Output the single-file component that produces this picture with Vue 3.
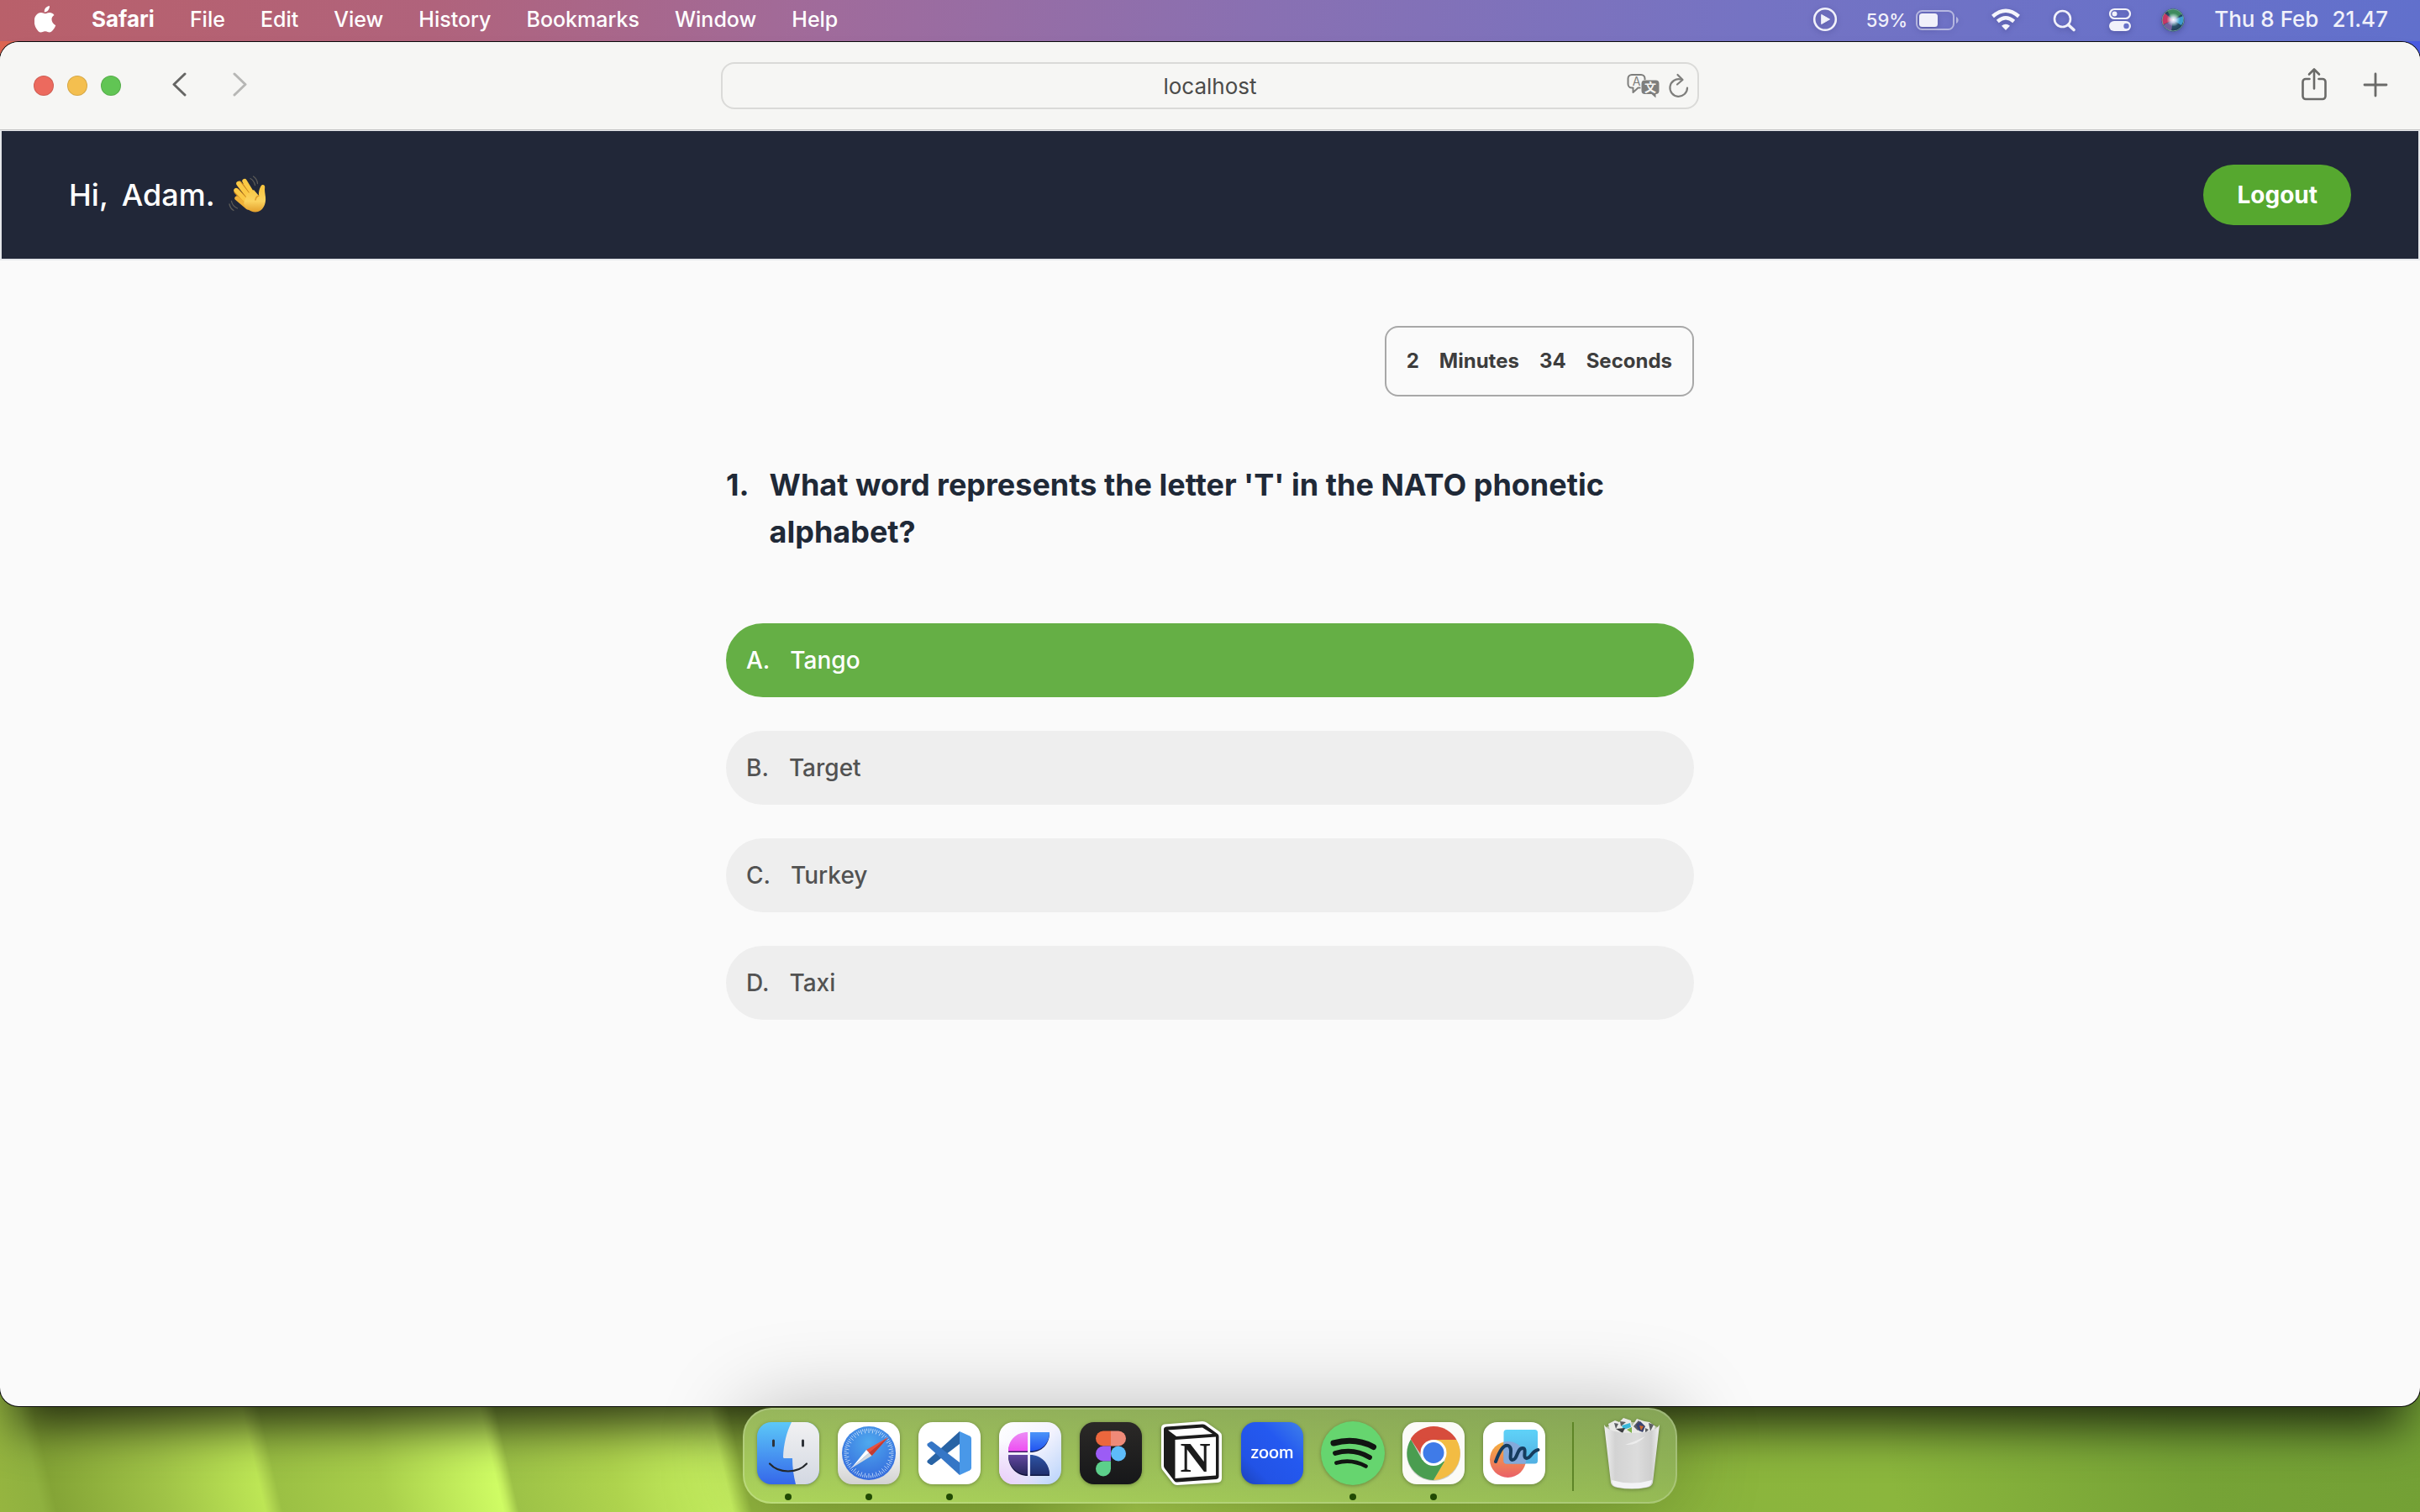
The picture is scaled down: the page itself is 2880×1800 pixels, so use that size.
<script setup>
import { ref } from 'vue'

const menus = ['File', 'Edit', 'View', 'History', 'Bookmarks', 'Window', 'Help']
const address = ref('localhost')
const selected = ref('A')
const options = [
  { key: 'A', text: 'Tango' },
  { key: 'B', text: 'Target' },
  { key: 'C', text: 'Turkey' },
  { key: 'D', text: 'Taxi' },
]

// Safari dial: 72 ticks, alternately long and short
const ticks = Array.from({ length: 72 }, (_, i) => {
  const a = (i * 5 * Math.PI) / 180
  const inner = i % 2 ? 26.5 : 24
  return {
    x1: 37 + inner * Math.sin(a),
    y1: 37 - inner * Math.cos(a),
    x2: 37 + 29.5 * Math.sin(a),
    y2: 37 - 29.5 * Math.cos(a),
  }
})
</script>

<template>
  <div class="desktop">
    <header class="menubar">
      <nav class="menus" aria-label="Menu bar">
        <svg class="apple" width="26" height="32" viewBox="0 0 26 32" aria-hidden="true">
          <path d="M17.900 0c.3 2-.5 3.900-1.600 5.200-1.100 1.400-2.800 2.300-4.500 2.200-.3-1.900.6-3.900 1.600-5.100C14.600 1 16.400.1 17.900 0z" />
          <path d="M25.300 23.200c-.7 1.700-1.100 2.400-2 3.900-1.300 2-3.100 4.500-5.300 4.500-2 0-2.500-1.300-5.200-1.300s-3.300 1.300-5.200 1.300c-2.200 0-3.900-2.300-5.200-4.300C-1.200 21.800-.9 14.300 2.100 11c1.500-1.800 3.600-2.900 5.700-2.900 2.100 0 3.400 1.200 5.200 1.200 1.700 0 2.700-1.200 5.200-1.200 1.900 0 3.800 1 5.300 2.800-4.600 2.500-3.900 9.100 1.800 12.300z" />
        </svg>
        <button class="menu app" type="button">Safari</button>
        <button v-for="m in menus" :key="m" class="menu" type="button">{{ m }}</button>
      </nav>

      <div class="status">
        <svg width="30" height="48" viewBox="0 0 30 48" aria-hidden="true">
          <circle cx="15" cy="23" r="12.800" fill="none" stroke="#f1f1fa" stroke-width="2.600" />
          <path d="M10.700 17.400v11.200l9.800-5.600z" fill="#f1f1fa" stroke="#f1f1fa" stroke-linejoin="round" />
        </svg>
        <div class="battery">
          <span>59%</span>
          <svg width="56" height="48" viewBox="0 0 56 48" aria-hidden="true">
            <rect x="2" y="13" width="44" height="22" rx="6.500" fill="none" stroke="#fff" stroke-opacity=".5" stroke-width="2" />
            <rect x="5" y="16" width="22" height="16" rx="3.500" fill="#f1f1fa" />
            <path d="M49 20c3.500 1.500 3.500 6.500 0 8z" fill="#fff" fill-opacity=".5" />
          </svg>
        </div>
        <svg width="40" height="48" viewBox="0 0 40 48" fill="none" stroke="#f5f5fc" stroke-width="4.400" aria-hidden="true">
          <path d="M2.500 19.500Q18 6 33.500 19.500" />
          <path d="M8.300 25.500Q18 17 27.700 25.500" />
          <path d="M18 36l-5-5.200q5-4.300 10 0z" fill="#f5f5fc" stroke="none" />
        </svg>
        <svg width="30" height="48" viewBox="0 0 30 48" fill="none" stroke="#f1f1fa" aria-hidden="true">
          <circle cx="11.500" cy="22.500" r="9.500" stroke-width="2.600" />
          <path d="M18.500 29.500l6.500 6" stroke-width="3.600" stroke-linecap="round" />
        </svg>
        <svg width="30" height="48" viewBox="0 0 30 48" aria-hidden="true">
          <rect x="4" y="11" width="24" height="11" rx="5.500" fill="none" stroke="#f1f1fa" stroke-width="2.200" />
          <circle cx="9.500" cy="16.500" r="3" fill="#f1f1fa" />
          <rect x="3" y="25" width="26" height="12" rx="6" fill="#f1f1fa" />
          <circle cx="23.500" cy="31" r="3.200" fill="#6872c8" />
        </svg>
        <svg width="30" height="48" viewBox="0 0 30 48" aria-hidden="true">
          <defs>
            <radialGradient id="siriBase"><stop offset="0" stop-color="#3b6c8f" /><stop offset=".7" stop-color="#274a63" /><stop offset="1" stop-color="#1f3b56" /></radialGradient>
            <radialGradient id="siriGlow"><stop offset="0" stop-color="#fff" /><stop offset=".4" stop-color="#e9eaff" stop-opacity=".8" /><stop offset="1" stop-color="#cfe" stop-opacity="0" /></radialGradient>
          </defs>
          <circle cx="15" cy="24" r="13.500" fill="url(#siriBase)" />
          <path d="M15 24L5 15.500a13 13 0 0 0-2 14z" fill="#c63765" />
          <path d="M15 24L8 12.500a13 13 0 0 1 18 4z" fill="#3f8a5e" />
          <path d="M15 24l12-5a13 13 0 0 1-2 11z" fill="#3d9bcf" />
          <path d="M15 24L4 29.500a13 13 0 0 0 9 7.500z" fill="#71609f" />
          <circle cx="15.500" cy="23.500" r="8" fill="url(#siriGlow)" />
          <circle cx="15" cy="24" r="13" fill="none" stroke="#6c9a98" stroke-width="1" />
        </svg>
        <time class="clock"><span>Thu 8 Feb</span><span>21.47</span></time>
      </div>
    </header>

    <section class="window">
      <div class="toolbar">
        <div class="tools">
          <div class="lights">
            <button class="light red" type="button" aria-label="Close"></button>
            <button class="light amber" type="button" aria-label="Minimise"></button>
            <button class="light green" type="button" aria-label="Zoom"></button>
          </div>
          <div class="arrows">
            <button class="icon" type="button" aria-label="Back">
              <svg width="20" height="32" viewBox="0 0 20 32"><path d="M16 2L3 14.500 16 27" fill="none" stroke="#666664" stroke-width="3" stroke-linecap="round" stroke-linejoin="round" /></svg>
            </button>
            <button class="icon" type="button" aria-label="Forward">
              <svg width="20" height="32" viewBox="0 0 20 32"><path d="M3 2l13 12.500L3 27" fill="none" stroke="#b7b7b5" stroke-width="3" stroke-linecap="round" stroke-linejoin="round" /></svg>
            </button>
          </div>
        </div>

        <div class="addressbar">
          <input v-model="address" class="address" type="text" aria-label="Address" />
          <div class="addresstools">
            <button class="icon" type="button" aria-label="Translate">
              <svg width="40" height="32" viewBox="0 0 40 32">
                <path d="M16.500 18.500h-3L7.500 24v-5.500H6A4.500 4.500 0 0 1 1.500 14V7.500A4.500 4.500 0 0 1 6 3h11a4.500 4.500 0 0 1 4.500 4.500V9" fill="none" stroke="#7e7e7c" stroke-width="2" stroke-linejoin="round" />
                <path d="M21.500 9.500h13a4 4 0 0 1 4 4V22a4 4 0 0 1-4 4v4.500l-5-4.500h-8a4 4 0 0 1-4-4v-8.500a4 4 0 0 1 4-4z" fill="#7e7e7c" />
                <text x="11.500" y="16" font-size="14" text-anchor="middle" fill="#7e7e7c">A</text>
                <text x="28" y="23" font-size="14" font-weight="700" text-anchor="middle" fill="#f6f6f4">文</text>
              </svg>
            </button>
            <button class="icon" type="button" aria-label="Reload">
              <svg width="26" height="32" viewBox="0 0 26 32" fill="none" stroke="#7e7e7c" stroke-width="2.200" stroke-linecap="round" stroke-linejoin="round">
                <path d="M23 18.500A10.300 10.300 0 1 1 15 8.500" /><path d="M11.500 3l6 6-6.500 5.500" />
              </svg>
            </button>
          </div>
        </div>

        <div class="tools end">
          <button class="icon" type="button" aria-label="Share">
            <svg width="32" height="44" viewBox="0 0 32 44" fill="none" stroke="#6a6a68" stroke-width="2.600" stroke-linecap="round" stroke-linejoin="round">
              <path d="M10.500 14H6a3.500 3.500 0 0 0-3.500 3.500v17A3.500 3.500 0 0 0 6 38h20a3.500 3.500 0 0 0 3.500-3.500v-17A3.500 3.500 0 0 0 26 14h-4.500M16 25.500V3M10 8.500L16 2.500l6 6" />
            </svg>
          </button>
          <button class="icon" type="button" aria-label="New tab">
            <svg width="30" height="32" viewBox="0 0 30 32"><path d="M15 2v26M2 15h26" stroke="#6a6a68" stroke-width="2.800" stroke-linecap="round" /></svg>
          </button>
        </div>
      </div>

      <div class="banner">
        <p class="greeting">
          <span>Hi,</span><span>Adam.</span>
          <svg width="48" height="46" viewBox="0 0 48 46" role="img" aria-label="Waving hand">
            <defs>
              <linearGradient id="skin" x1="0" y1="0" x2="0" y2="1"><stop offset="0" stop-color="#f7c33c" /><stop offset=".6" stop-color="#fbd35f" /><stop offset="1" stop-color="#e3a02c" /></linearGradient>
            </defs>
            <path d="M20 12L31 30" stroke="#e5a22f" stroke-width="7" stroke-linecap="round" />
            <path d="M19 6.500l11 18" stroke="#fbc945" stroke-width="5.400" stroke-linecap="round" />
            <path d="M13 10l14 19" stroke="#c98620" stroke-width="7" stroke-linecap="round" />
            <path d="M12 9.500l14 18" stroke="#fbc945" stroke-width="5.400" stroke-linecap="round" />
            <path d="M10 19l14 15" stroke="#c98620" stroke-width="7" stroke-linecap="round" />
            <path d="M9 17.500l14 15" stroke="#fbc945" stroke-width="5.400" stroke-linecap="round" />
            <path d="M10 27l13 11" stroke="#efb137" stroke-width="5.400" stroke-linecap="round" />
            <path d="M18 33l4-11 8-5 6 7c-.3-4 .4-8 2.500-11.500 1.800-2.800 5-1.500 4.700 1.200-.6 3.800.4 8 .8 12C44.800 34 41 43 32 43.500 25 43.500 20 38 18 33z" fill="url(#skin)" />
            <path d="M36 24c-2 .5-3.500 2-4 5" fill="none" stroke="#dc9a2b" stroke-width="1.500" stroke-linecap="round" />
            <path d="M26 3.500q4.500 2.500 5.500 8M29.500 1q4.500 3 5 8.500M3.500 30.500q1 6 7 8.500M1 34q1 5 5 7.500" fill="none" stroke="#5c5b58" stroke-width="1.300" stroke-linecap="round" />
          </svg>
        </p>
        <button class="logout" type="button">Logout</button>
      </div>

      <main class="quiz">
        <div class="timer" role="timer">
          <span>2</span><span>Minutes</span><span>34</span><span>Seconds</span>
        </div>
        <h1 class="question">
          <span>1.</span>
          <span>What word represents the letter 'T' in the NATO phonetic alphabet?</span>
        </h1>
        <div class="options">
          <button
            v-for="o in options"
            :key="o.key"
            type="button"
            class="option"
            :class="{ chosen: selected === o.key }"
            :aria-pressed="selected === o.key"
            @click="selected = o.key"
          >
            <span>{{ o.key }}.</span><span>{{ o.text }}</span>
          </button>
        </div>
      </main>
    </section>

    <footer class="dockarea">
      <nav class="dock" aria-label="Dock">
        <div class="app-slot running">
          <svg width="74" height="74" viewBox="0 0 74 74" role="img" aria-label="Finder">
            <defs>
              <linearGradient id="fBlue" x1="0" y1="0" x2="0" y2="1"><stop offset="0" stop-color="#5cc8f8" /><stop offset="1" stop-color="#3567ea" /></linearGradient>
              <linearGradient id="fGrey" x1="0" y1="0" x2="0" y2="1"><stop offset="0" stop-color="#f1f1f2" /><stop offset="1" stop-color="#d3d8e2" /></linearGradient>
              <clipPath id="tile"><rect width="74" height="74" rx="17" /></clipPath>
            </defs>
            <g clip-path="url(#tile)">
              <rect width="74" height="74" fill="url(#fBlue)" />
              <path d="M41 0C35 12 31.500 27 31 41.500q0 1.500 1.500 1.500H42c0 11 1.500 21 4 31h28V0z" fill="url(#fGrey)" />
            </g>
            <path d="M19.500 22v6M54.500 22v6" stroke="#2e3238" stroke-width="3" stroke-linecap="round" />
            <path d="M15 49.500c11 12 33 12 44 0" fill="none" stroke="#23272b" stroke-width="2.200" stroke-linecap="round" />
          </svg>
        </div>
        <div class="app-slot running">
          <svg width="74" height="74" viewBox="0 0 74 74" role="img" aria-label="Safari">
            <defs>
              <linearGradient id="sTile" x1="0" y1="0" x2="0" y2="1"><stop offset=".3" stop-color="#fff" /><stop offset="1" stop-color="#d2d2d2" /></linearGradient>
              <radialGradient id="sDial" cx=".5" cy=".3" r=".7"><stop offset="0" stop-color="#4fa9ee" /><stop offset="1" stop-color="#356bdc" /></radialGradient>
            </defs>
            <rect width="74" height="74" rx="17" fill="url(#sTile)" />
            <circle cx="37" cy="37" r="32" fill="url(#sDial)" />
            <line v-for="(t, i) in ticks" :key="i" v-bind="t" stroke="#d9ebfb" stroke-width=".8" />
            <path d="M60 18L34 33l6.500 7z" fill="#e8503f" />
            <path d="M60 18L37 36.500l3.500 3.500z" fill="#c23b31" />
            <path d="M16 55L34 33l3.200 3.500z" fill="#fff" />
            <path d="M16 55l21.200-18.500 3.300 3.500z" fill="#d5d9de" />
          </svg>
        </div>
        <div class="app-slot running">
          <svg width="74" height="74" viewBox="0 0 74 74" role="img" aria-label="Visual Studio Code">
            <rect width="74" height="74" rx="17" fill="#fff" />
            <path d="M49 11L11 45.500q-1.500 1.500 0 3l3 2q1.500 1 3 0L49 26z" fill="#2863a5" />
            <path d="M49 63L11 28.500q-1.500-1.500 0-3l3-2q1.500-1 3 0L49 48z" fill="#3576c6" />
            <path d="M49 11l12 5.500q2 1 2 3v35q0 2-2 3L49 63z" fill="#4998e8" />
          </svg>
        </div>
        <div class="app-slot">
          <svg width="74" height="74" viewBox="0 0 74 74" role="img" aria-label="Craft">
            <defs>
              <linearGradient id="cTile" x1="0" y1="0" x2="1" y2="1"><stop offset="0" stop-color="#fff" /><stop offset=".5" stop-color="#f3f3fe" /><stop offset="1" stop-color="#b7d2fa" /></linearGradient>
              <radialGradient id="cPink" cx="0" cy="1" r=".7"><stop offset="0" stop-color="#e9cdf9" /><stop offset="1" stop-color="#e9cdf9" stop-opacity="0" /></radialGradient>
              <linearGradient id="c1" x1="0" y1="0" x2="0" y2="1"><stop offset="0" stop-color="#ec8df5" /><stop offset="1" stop-color="#ee4ef2" /></linearGradient>
              <linearGradient id="c2" x1="0" y1="0" x2="0" y2="1"><stop offset="0" stop-color="#4b94f8" /><stop offset="1" stop-color="#2253f0" /></linearGradient>
              <linearGradient id="c3" x1="0" y1="0" x2="0" y2="1"><stop offset="0" stop-color="#62479f" /><stop offset="1" stop-color="#29275f" /></linearGradient>
              <linearGradient id="c4" x1="0" y1="0" x2="0" y2="1"><stop offset="0" stop-color="#2e54a4" /><stop offset="1" stop-color="#20306f" /></linearGradient>
            </defs>
            <rect width="74" height="74" rx="17" fill="url(#cTile)" />
            <rect width="74" height="74" rx="17" fill="url(#cPink)" />
            <path d="M34 13v23H11c0-13 9-23 23-23z" fill="#3a1d63" /><path d="M34 12v22.500H11c0-13 9-22.500 23-22.500z" fill="url(#c1)" />
            <path d="M37 13h23c0 13-9 23-23 23z" fill="#16225c" /><path d="M37 12h23c0 13-9 22.500-23 22.500z" fill="url(#c2)" />
            <path d="M34 40v24c-13 0-23-10-23-24z" fill="#12123c" /><path d="M34 39v23.500c-13 0-23-10-23-23.500z" fill="url(#c3)" />
            <path d="M37 40c13 0 23 10 23 24H37z" fill="#101a45" /><path d="M37 39c13 0 23 10 23 23.500H37z" fill="url(#c4)" />
          </svg>
        </div>
        <div class="app-slot">
          <svg width="74" height="74" viewBox="0 0 74 74" role="img" aria-label="Figma">
            <defs><linearGradient id="gTile" x1="0" y1="0" x2="0" y2="1"><stop offset="0" stop-color="#2b2927" /><stop offset="1" stop-color="#161719" /></linearGradient></defs>
            <rect width="74" height="74" rx="17" fill="url(#gTile)" />
            <path d="M37 10.500h-9a9 9 0 0 0 0 18h9z" fill="#ec673d" />
            <path d="M37 10.500h9a9 9 0 0 1 0 18h-9z" fill="#ef8a78" />
            <path d="M37 28.500h-9a9 9 0 0 0 0 18h9z" fill="#9c5cf5" />
            <circle cx="46" cy="37.500" r="9" fill="#5dbcfa" />
            <path d="M37 46.500h-9a9 9 0 1 0 9 9z" fill="#5ccf8b" />
          </svg>
        </div>
        <div class="app-slot">
          <svg width="74" height="78" viewBox="0 0 74 78" role="img" aria-label="Notion">
            <path d="M5 4.500L50 1q3 0 5 1.500l15.500 11q2.500 2 2.500 5v50q0 5-5 5.500L20 77q-3 0-5-2L2.500 59Q1 57 1 54V9q0-4 4-4.500z" fill="#fff" />
            <path d="M7 7.500L50 4.500q2 0 3.500 1L68 16q1.500 1 1.500 3v47.500q0 3-3 3.500L19.500 73.500q-2 0-3-1.500L5 57q-1-1.500-1-3V10.500q0-2.500 3-3z" fill="#1b1b1b" />
            <path d="M9 11.500L50 8.500l12 7.500L19 19z" fill="#fff" />
            <path d="M17.500 23L66 19.500v46L17.500 69z" fill="#fff" />
            <text x="41.500" y="61" text-anchor="middle" font-family="'Liberation Serif', serif" font-weight="700" font-size="50" fill="#1b1b1b">N</text>
          </svg>
        </div>
        <div class="app-slot">
          <svg width="74" height="74" viewBox="0 0 74 74" role="img" aria-label="Zoom">
            <defs><linearGradient id="zTile" x1="1" y1="0" x2="0" y2="1"><stop offset="0" stop-color="#3f80ea" /><stop offset=".35" stop-color="#2459f0" /><stop offset=".75" stop-color="#2253e6" /><stop offset="1" stop-color="#1c42b8" /></linearGradient></defs>
            <rect width="74" height="74" rx="17" fill="url(#zTile)" />
            <text x="37" y="43" text-anchor="middle" font-size="21" font-weight="600" font-family="Lato, sans-serif" fill="#fff">zoom</text>
          </svg>
        </div>
        <div class="app-slot running">
          <svg width="76" height="76" viewBox="0 0 76 76" role="img" aria-label="Spotify">
            <circle cx="38" cy="38" r="38" fill="#66d56f" />
            <g fill="none" stroke="#111512" stroke-linecap="round">
              <path d="M15 26q26-7 47.500 4.500" stroke-width="7" />
              <path d="M17 38q22-6.500 41 5" stroke-width="5.800" />
              <path d="M18.500 49.500q18-5 35 4" stroke-width="4.800" />
            </g>
          </svg>
        </div>
        <div class="app-slot running">
          <svg width="74" height="74" viewBox="0 0 74 74" role="img" aria-label="Chrome">
            <rect width="74" height="74" rx="17" fill="#fbfbf7" />
            <circle cx="37" cy="38" r="32" fill="#c9ccc6" />
            <path d="M37 37L10 19.500A32 32 0 0 1 64.400 21z" fill="#d74c3c" />
            <path d="M37 21h27.400A32 32 0 0 1 37 69l14-24z" fill="#f3bc43" />
            <path d="M23.500 45L10 20.500A32 32 0 0 0 37 69l13-22z" fill="#4a9d50" />
            <path d="M23 40L10 20.500q1-2 2-3L37 21z" fill="#d74c3c" />
            <circle cx="37" cy="36.500" r="15.500" fill="#fff" />
            <circle cx="37" cy="36.500" r="12.500" fill="#3f7be8" />
          </svg>
        </div>
        <div class="app-slot">
          <svg width="74" height="74" viewBox="0 0 74 74" role="img" aria-label="Freeform">
            <defs>
              <linearGradient id="ffO" x1="0" y1="0" x2="0" y2="1"><stop offset="0" stop-color="#f5b13f" /><stop offset="1" stop-color="#ea6068" /></linearGradient>
              <linearGradient id="ffB" x1="0" y1="0" x2="0" y2="1"><stop offset="0" stop-color="#5fd2f8" /><stop offset="1" stop-color="#52b0e2" /></linearGradient>
            </defs>
            <rect width="74" height="74" rx="17" fill="#fff" />
            <circle cx="29.500" cy="44.500" r="21.500" fill="url(#ffO)" />
            <rect x="24.500" y="9" width="40.500" height="40.500" rx="3.500" fill="url(#ffB)" />
            <path d="M24.500 23.600A21.500 21.500 0 0 1 50.500 49.500h-23q-3 0-3-3z" fill="#84a9da" />
            <path d="M15 47C20 33 25 26 30 28c7 3-1 17 5 17s5-14 12-14c6 0-1 12 5 12 5 0 6-9 13.500-10" fill="none" stroke="#163c5e" stroke-width="4" stroke-linecap="round" stroke-linejoin="round" />
          </svg>
        </div>
        <div class="divider"></div>
        <div class="app-slot">
          <svg width="68" height="88" viewBox="0 0 68 88" role="img" aria-label="Trash">
            <defs>
              <linearGradient id="bin" x1="0" y1="0" x2="1" y2="0"><stop offset="0" stop-color="#f0f0f0" /><stop offset=".2" stop-color="#d3d3d3" /><stop offset=".6" stop-color="#dcdcdc" /><stop offset=".85" stop-color="#cfcfcf" /><stop offset="1" stop-color="#f1f1f1" /></linearGradient>
            </defs>
            <path d="M3 13q31-12 62 0l-3 8H6z" fill="#b9c3a8" />
            <path d="M6 9l8-4 5 2 5-5 9 3 1 7 6-9 9 3 6 1 7 5-3 9H9z" fill="#e9e9e7" />
            <path d="M13 8l5 1-3 6zM20 6l7 1-6 5zM36 12l6-7 4 5-5 7zM54 8l6 2-4 8zM50 14l4 2-4 4z" fill="#5d5f63" />
            <path d="M22 11l10-3 1 5-9 3z" fill="#38b7d9" />
            <path d="M39 10l5-4 6 6-3 7-5-2z" fill="#3a4470" /><path d="M43 11l5 1-3 5z" fill="#d0672d" />
            <path d="M28 16l6-3v7z" fill="#7eb34b" />
            <path d="M15 15l11-1-3 6z" fill="#3b3c40" />
            <path d="M1 10q5 10 33 10t33-10l-8 69q-1 5-8 6-17 3-34 0-7-1-8-6z" fill="url(#bin)" />
            <path d="M10 76q24 7 48 0l-.5 3q-1 4.500-7 5.500-16 3-33 0-6-1-7-5.500z" fill="#f3f3f6" />
            <path d="M26 34q14 1 24-10-12 6-24 10z" fill="#ececec" />
          </svg>
        </div>
      </nav>
    </footer>
  </div>
</template>

<style>
body {
  margin: 0;
}
</style>

<style scoped>
.desktop {
  display: flex;
  flex-direction: column;
  min-height: 100vh;
  overflow: hidden;
  font-family: Inter, "Liberation Sans", "Noto Sans CJK SC", sans-serif;
  background-color: #8fb53d;
  background-image:
    linear-gradient(90deg, #dd6652, #b4302f 24%, #4a5be0 60%, #4a5be0),
    linear-gradient(
      77deg,
      #96b540 0,
      #8fb13f 50px,
      #84a436 66px,
      #a0c347 196px,
      #bde655 308px,
      #b4da52 314px,
      #9bc044 328px,
      #a9cf4b 450px,
      #cffc64 584px,
      #c4ee5e 590px,
      #9dc247 602px,
      #aed34d 720px,
      #c8f261 850px,
      #93b73f 872px,
      #8bb03a 1180px,
      #a6cc4b 1320px,
      #8cb23c 1600px,
      #8bb63d 2200px,
      #76a336 2550px,
      #73a035 100%
    );
  background-repeat: no-repeat;
  background-position: top, bottom;
  background-size: 100% 120px, 100% 156px;
}

button {
  margin: 0;
  padding: 0;
  border: 0;
  background: none;
  color: inherit;
  font: inherit;
  cursor: pointer;
}

svg {
  display: block;
  flex: none;
}

.menubar {
  display: flex;
  justify-content: space-between;
  height: 49px;
  padding: 0 38px 0 41px;
  color: #fff;
  font-size: 25px;
  font-weight: 500;
  line-height: 46px;
  background: linear-gradient(95deg, #b9606a, #b0637c 18%, #a06b9b 34%, #8970b2 52%, #7573c3 72%, #6170cc);
}

.menus,
.status {
  display: flex;
}

.menus {
  gap: 42px;
}

.apple {
  margin-top: 7px;
  fill: #fff;
}

.menu {
  height: 46px;
}

.menu.app {
  font-size: 26px;
  font-weight: 700;
}

.status {
  gap: 34px;
  color: #f1f1fa;
}

.status svg {
  filter: drop-shadow(0 2px 3px rgba(30, 30, 90, 0.3));
}

.battery {
  display: flex;
  gap: 9px;
  font-size: 22px;
  line-height: 48px;
}

.clock {
  display: flex;
  gap: 16px;
  font-size: 26px;
}

.window {
  position: relative;
  z-index: 1;
  display: flex;
  flex: 1;
  flex-direction: column;
  border-radius: 22px;
  background: #fafafa;
  box-shadow: 0 0 0 1px #0a0a0a, 0 42px 56px -18px rgba(0, 0, 0, 0.75);
  margin-top: 1px;
}

.toolbar {
  display: grid;
  grid-template-columns: 1fr minmax(400px, 1164px) 1fr;
  align-items: center;
  height: 104px;
  padding: 0 38px;
  border-bottom: 1px solid #c4c4c4;
  border-radius: 22px 22px 0 0;
  background: #f6f6f4;
}

.tools {
  display: flex;
  align-items: center;
  gap: 60px;
}

.tools.end {
  justify-content: flex-end;
  gap: 42px;
}

.lights {
  display: flex;
  gap: 16px;
  padding-left: 2px;
}

.light {
  width: 24px;
  height: 24px;
  border: 1px solid rgba(0, 0, 0, 0.12);
  border-radius: 50%;
}

.red {
  background: #ec6a5e;
}

.amber {
  background: #f4bf4f;
}

.green {
  background: #61c554;
}

.arrows {
  display: flex;
  gap: 52px;
}

.addressbar {
  position: relative;
}

.address {
  display: block;
  box-sizing: border-box;
  width: 100%;
  height: 56px;
  padding: 0 96px;
  border: 2px solid #dadad8;
  border-radius: 16px;
  background: #f6f6f4;
  color: #4b4b4a;
  font: 400 26px Inter, "Liberation Sans", sans-serif;
  text-align: center;
}

.addresstools {
  position: absolute;
  top: 0;
  right: 11px;
  bottom: 0;
  display: flex;
  align-items: center;
  gap: 9px;
}

.banner {
  display: flex;
  align-items: center;
  justify-content: space-between;
  height: 152px;
  padding: 0 80px;
  border: 2px solid #e5e7eb;
  border-top-width: 1px;
  background: #212738;
  color: #fff;
}

.greeting {
  display: flex;
  align-items: center;
  gap: 16px;
  margin: 0;
  font-size: 36px;
  font-weight: 500;
  line-height: 44px;
}

.logout {
  padding: 0 40px;
  border-radius: 36px;
  background: #56a82f;
  color: #fff;
  font-size: 28px;
  font-weight: 700;
  line-height: 72px;
}

.quiz {
  display: flex;
  flex-direction: column;
  width: 40%;
  min-width: 600px;
  margin: 0 auto;
  padding-top: 78px;
}

.timer {
  display: flex;
  align-self: flex-end;
  gap: 24px;
  padding: 0 24px;
  border: 2px solid #a8a8a8;
  border-radius: 16px;
  color: #3d3d3d;
  font-size: 24px;
  font-weight: 700;
  line-height: 80px;
}

.question {
  display: flex;
  gap: 24px;
  margin: 77px 0 81px;
  color: #1f2937;
  font-size: 36px;
  font-weight: 700;
  line-height: 56px;
}

.options {
  display: flex;
  flex-direction: column;
  gap: 40px;
}

.option {
  display: flex;
  gap: 24px;
  padding: 0 24px;
  border-radius: 44px;
  background: #eee;
  color: #525252;
  font-size: 28px;
  font-weight: 500;
  line-height: 88px;
}

.option.chosen {
  background: #65af45;
  color: #fff;
}

.dockarea {
  position: relative;
  z-index: 2;
  display: flex;
  justify-content: center;
  padding: 2px 0 10px;
}

.dock {
  display: flex;
  align-items: flex-start;
  gap: 22px;
  box-sizing: border-box;
  height: 114px;
  padding: 15px 15px 0;
  border: 2px solid rgba(255, 255, 255, 0.2);
  border-radius: 34px;
  background: linear-gradient(90deg, rgba(90, 110, 60, 0), rgba(80, 110, 70, 0.25)) border-box, linear-gradient(#97b65c, #add55a) border-box;
  box-shadow: 0 0 100px rgba(0, 0, 0, 0.26);
}

.app-slot {
  position: relative;
  display: flex;
  align-items: center;
  justify-content: center;
  width: 74px;
  height: 74px;
}

.app-slot svg {
  filter: drop-shadow(0 1px 2px rgba(0, 0, 0, 0.3));
}

.running::after {
  content: "";
  position: absolute;
  bottom: -19px;
  left: 33px;
  width: 8px;
  height: 8px;
  border-radius: 50%;
  background: #214a04;
}

.divider {
  width: 2px;
  height: 82px;
  margin: 0 10px;
  background: #5e8527;
}
</style>
